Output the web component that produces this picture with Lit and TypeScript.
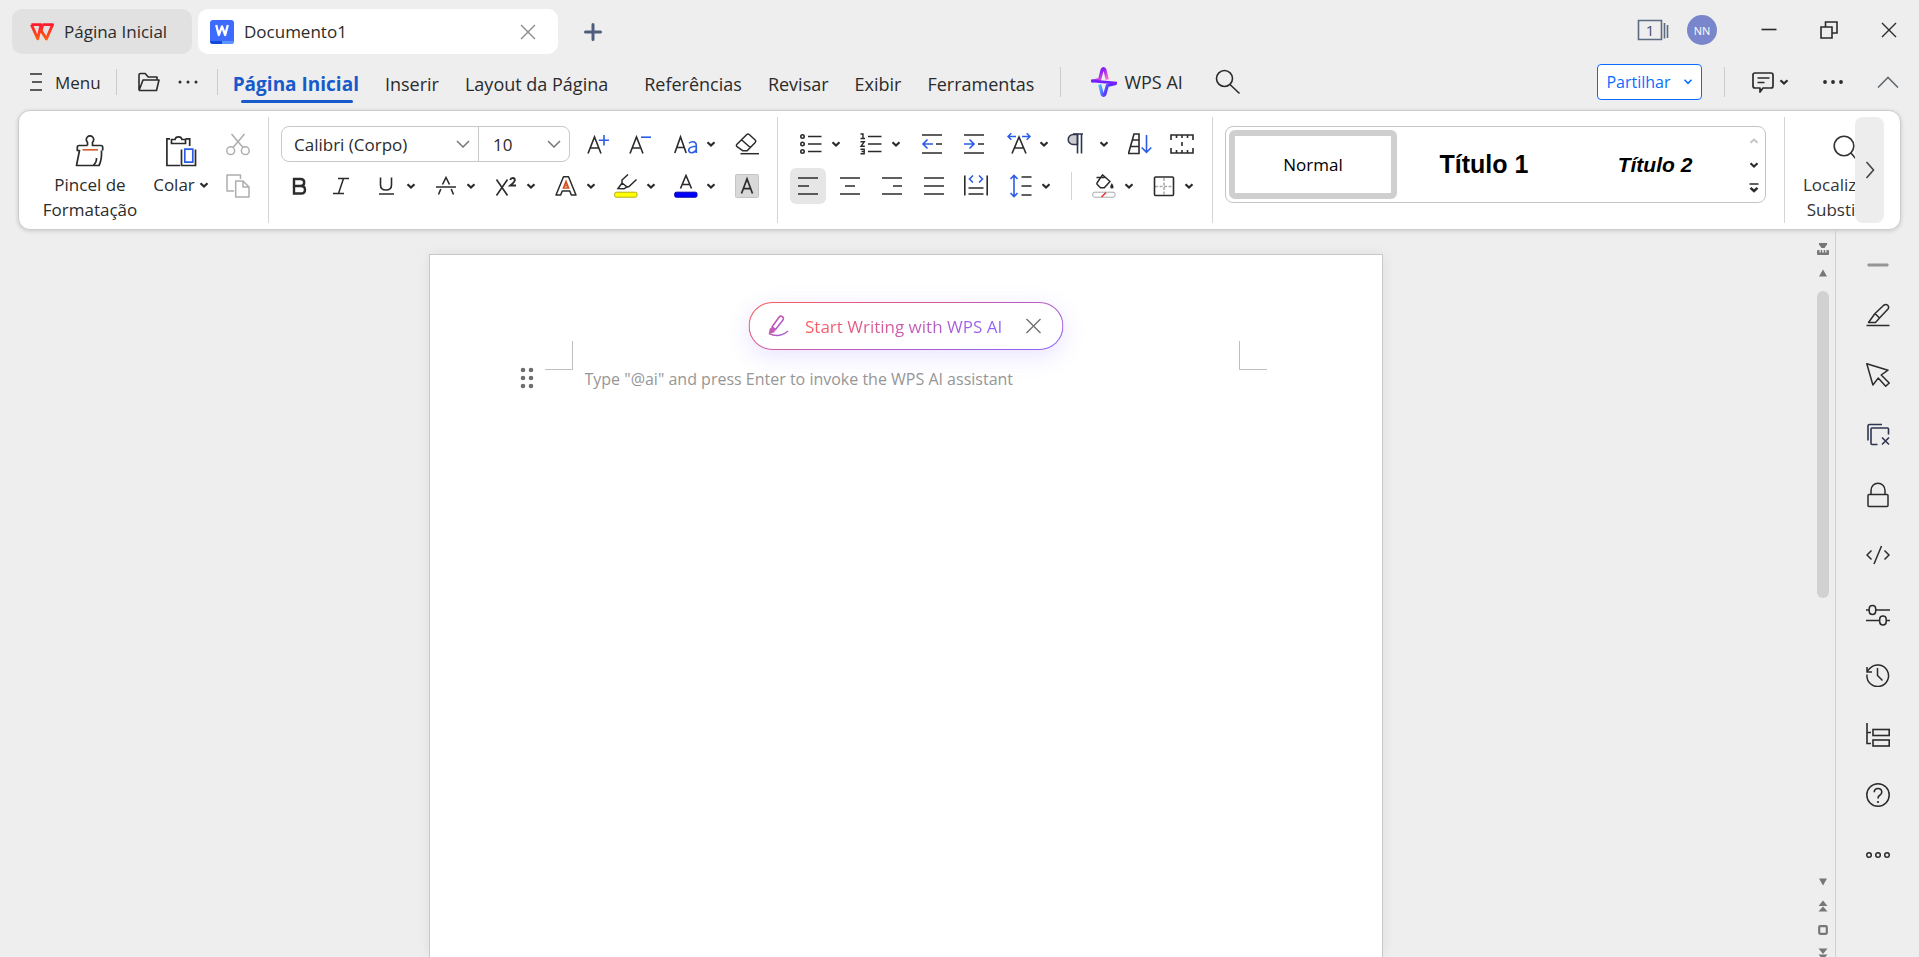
import { LitElement, html, svg, css, nothing, type SVGTemplateResult } from "lit";
import { customElement, property, state } from "lit/decorators.js";
import { classMap } from "lit/directives/class-map.js";

type Glyph = { w: number; h: number; art: SVGTemplateResult };

const g = (w: number, h: number, art: SVGTemplateResult): Glyph => ({ w, h, art });

const ICONS: Record<string, Glyph> = {
  wps: g(24, 18, svg`
    <defs><linearGradient id="wps" x1="0" y1="0" x2="0" y2="1">
      <stop offset="0" stop-color="#ff1a2e"/><stop offset="1" stop-color="#ff5a10"/></linearGradient></defs>
    <path d="M1.4 1.6H11L7.8 15.8 1.4 1.6M12.6 1.6H22.6L16.4 16 9.8 5.6M12.6 1.6 11.4 7.4"
      fill="none" stroke="url(#wps)" stroke-width="2.8" stroke-linejoin="round"/>`),
  doc: g(24, 24, svg`
    <rect width="24" height="24" rx="3" fill="#3d6bff"/>
    <path d="M0 21h12v3H3a3 3 0 0 1-3-3z" fill="#0f4bd8"/><path d="M12 21h12a3 3 0 0 1-3 3h-9z" fill="#5b95ff"/>
    <path d="M6.2 5 8.8 15 12 6.4 15.2 15 17.8 5" fill="none" stroke="#fff" stroke-width="2.3" stroke-linejoin="round"/>`),
  close: g(16, 16, svg`<path d="M1 1 15 15M15 1 1 15" fill="none" stroke="currentColor" stroke-width="1.4"/>`),
  plus: g(18, 18, svg`<path d="M9 1.5v15M1.5 9h15" stroke="#4e5d7c" stroke-width="3" stroke-linecap="round"/>`),
  pages: g(32, 22, svg`
    <path d="M1.5 1.5h23v19h-23zM27.5 4v15.5M30.5 6v13" fill="none" stroke="#5b6b82" stroke-width="1.6"/>`),
  minimize: g(16, 16, svg`<path d="M.5 7.5h15" stroke="currentColor" stroke-width="1.6"/>`),
  restore: g(18, 18, svg`<path d="M1 6h11v11H1zM5.5 6V1H17v11h-5" fill="none" stroke="currentColor" stroke-width="1.6"/>`),
  burger: g(14, 18, svg`<path d="M1 1h12M3 9h10M1 17h12" stroke="currentColor" stroke-width="1.5"/>`),
  folder: g(24, 20, svg`
    <path d="M2 18.5V3q0-1.500 1.500-1.500h4.700l3 3.500H20v3M2 18.500 6 8h16l-2.500 10.500H2" fill="none" stroke="currentColor" stroke-width="1.600" stroke-linejoin="round"/>`),
  dots: g(20, 6, svg`<g fill="currentColor"><circle cx="2" cy="3" r="1.5"/><circle cx="10" cy="3" r="1.5"/><circle cx="18" cy="3" r="1.5"/></g>`),
  dotsBold: g(20, 6, svg`<g fill="currentColor"><circle cx="2" cy="3" r="1.9"/><circle cx="10" cy="3" r="1.9"/><circle cx="18" cy="3" r="1.9"/></g>`),
  spark: g(26, 30, svg`
    <defs>
      <linearGradient id="sp1" x1="0" y1="0" x2="1" y2="1"><stop offset=".4" stop-color="#8a1cf8"/><stop offset=".9" stop-color="#ff6ad0"/></linearGradient>
      <linearGradient id="sp2" x1="0" y1="0" x2="1" y2=".3"><stop offset="0" stop-color="#4fc8ff"/><stop offset=".6" stop-color="#5a2bff"/></linearGradient>
    </defs>
    <path d="M1 14.200 8.700 12.500 11.200 2.700q1.300-2 2.600 0L16.300 12.500" fill="none" stroke="url(#sp1)" stroke-width="3.200"/>
    <path d="M8.700 17.500 11.200 27.300q1.300 2 2.600 0L16.300 18.500 25 16.500" fill="none" stroke="url(#sp2)" stroke-width="3.200"/>
    <path d="M0 12.500 26 14.800v2.700L0 15.200z" fill="#7420ff"/>`),
  search: g(26, 26, svg`<g fill="none" stroke="currentColor" stroke-width="1.6"><circle cx="9.5" cy="9.5" r="8"/><path d="M15 15.5 24.5 24.5"/></g>`),
  locate: g(32, 32, svg`<g fill="none" stroke="currentColor" stroke-width="1.6"><circle cx="15" cy="11" r="9.8"/><path d="M22 18 29.500 27"/></g>`),
  comment: g(22, 22, svg`
    <g fill="none" stroke="currentColor" stroke-width="1.7" stroke-linejoin="round"><path d="M3 2h16q2 0 2 2v11q0 2-2 2h-8l-3 4v-4H3q-2 0-2-2V4q0-2 2-2z"/><path d="M5.5 7h12M5.5 11.5h7"/></g>`),
  chevron: g(10, 10, svg`<path d="M1.5 3.2 5 6.5 8.5 3.2" fill="none" stroke="currentColor" stroke-width="2.2"/>`),
  chevronBlue: g(10, 10, svg`<path d="M1.5 2.800 5 6.300 8.500 2.800" fill="none" stroke="currentColor" stroke-width="1.6"/>`),
  chevronThin: g(14, 8, svg`<path d="M1 1 7 7 13 1" fill="none" stroke="#777" stroke-width="1.5"/>`),
  collapse: g(22, 12, svg`<path d="M1 11.5 11 1.5 21 11.5" fill="none" stroke="#666b75" stroke-width="1.6"/>`),
  next: g(10, 18, svg`<path d="M1.5 1 8.5 9 1.5 17" fill="none" stroke="#444" stroke-width="1.6"/>`),
  painter: g(32, 32, svg`
    <g fill="none" stroke="currentColor" stroke-width="1.7" stroke-linejoin="round">
      <path d="M13.500 10.500V7.300a3.700 3.700 0 1 1 5 0v3.200H27q1.700 0 1.700 1.700v3.300M13.500 10.500H5q-1.700 0-1.700 1.700v3.300H5.500L2.500 30.500H25q3-6 2.500-15"/>
      <path d="M22.500 23q.3 4.500-3.200 7.300"/></g>
    <path d="M8.5 14.800H24" stroke="#d2622a" stroke-width="1.7"/>`),
  paste: g(32, 32, svg`
    <g fill="none" stroke="currentColor" stroke-width="1.7">
      <path d="M5 3.800H1.900V30.500H15M20.500 3.800h4.200V11M6.500 4.500V8.500h14V4.500h-3.600q-.4-2.700-3.400-2.700t-3.400 2.700z"/>
      <path d="M16.500 14.500v16h14v-16"/></g>
    <path d="M19.800 14.200h8v13h-8z" fill="none" stroke="#2b5ce6" stroke-width="1.7"/>`),
  cut: g(24, 24, svg`<g fill="none" stroke="#adadad" stroke-width="1.5"><circle cx="4.7" cy="18.7" r="3.9"/><circle cx="19.3" cy="18.7" r="3.9"/><path d="M5.5 2 17 15.5M18.5 2 7 15.5"/></g>`),
  copy: g(24, 24, svg`<path d="M8 17H1V1h13.500v4M9.700 7h7.300l6 6v10H9.700zM17 7v6h6" fill="none" stroke="#adadad" stroke-width="1.5" stroke-linejoin="round"/>`),
  grow: g(24, 24, svg`<path d="M1 21.5 7.5 5 14 21.5M3.5 16h8" fill="none" stroke="currentColor" stroke-width="1.6"/><path d="M17 3v10.5M11.800 8.200H22" stroke="#2b5ce6" stroke-width="1.6"/>`),
  shrink: g(24, 24, svg`<path d="M1 21.5 7.5 5 14 21.5M3.5 16h8" fill="none" stroke="currentColor" stroke-width="1.6"/><path d="M12 5.200H22" stroke="#2b5ce6" stroke-width="1.6"/>`),
  letterCase: g(24, 24, svg`<path d="M.8 21 6.500 5 12.200 21M2.800 15.500h7.500" fill="none" stroke="currentColor" stroke-width="1.6"/><path d="M15 11.300q1.500-1.500 3.600-1.500 3.700 0 3.700 3.700V21M22.300 14.300c-5 .3-7.600 1-7.600 3.700 0 3.800 5.900 3.700 7.600-.6" fill="none" stroke="#2b5ce6" stroke-width="1.6"/>`),
  eraser: g(24, 24, svg`<g fill="none" stroke="currentColor" stroke-width="1.5" stroke-linejoin="round"><path d="M2 12.200 11.800 2.500q1.200-1 2.400 0l6 5.500q1.200 1.300 0 2.500l-8 8.300H8L2 14.600q-1.200-1.200 0-2.400zM6.500 7.700l9 8"/><path d="M5.500 21.700h18.500"/></g>`),
  bold: g(24, 24, svg`<path d="M7 5h6.500q3.700 0 3.700 3.400T13.500 12H7zM7 12h7q4 0 4 3.700t-4 3.800H7z" fill="none" stroke="currentColor" stroke-width="2.4"/>`),
  italic: g(24, 24, svg`<path d="M9 4.500H20M4 19.500H15M14.500 4.500 9.500 19.500" stroke="currentColor" stroke-width="1.5"/>`),
  underline: g(24, 24, svg`<path d="M6.500 3.500V11q0 5 5.500 5t5.500-5V3.500M5 20h15" fill="none" stroke="currentColor" stroke-width="1.6"/>`),
  strike: g(24, 24, svg`<path d="M2 13h20M8.500 10.500 12 3.500l3.500 7M6.800 15 4.500 20.500M17.200 15l2.300 5.500" fill="none" stroke="currentColor" stroke-width="1.6"/>`),
  power: g(24, 24, svg`<path d="M2.500 5.500 13.500 21.500M13.500 5.500 2.500 21.500" stroke="currentColor" stroke-width="1.6"/><path d="M16.200 6Q16.800 4 18.800 4t2 2.200Q20.800 7.600 16.300 11.500H22" fill="none" stroke="currentColor" stroke-width="1.9"/>`),
  effects: g(24, 24, svg`<path d="M2 21 9.500 2.800h5L22 21h-4.700l-1.500-4H8.200l-1.500 4z" fill="none" stroke="currentColor" stroke-width="1.5" stroke-linejoin="round"/><path d="M9.500 14 12 7.500l2.500 6.500zM10.500 11.600h3" fill="none" stroke="#d2531f" stroke-width="1.7"/>`),
  highlight: g(24, 24, svg`<g fill="none" stroke="currentColor" stroke-width="1.5"><path d="M4 14.500 8 9 13 13l-3 1.800zM8 9V6l6-5.500M13 13l2-.5 7.500-7"/></g><rect x=".7" y="18.2" width="22.3" height="5" rx="1.5" fill="#ff0" stroke="#b9ab10"/>`),
  fontColor: g(24, 24, svg`<path d="M6.500 14.500 12 1.500l5.500 13M8.500 10.500h7" fill="none" stroke="currentColor" stroke-width="1.6"/><rect x=".7" y="18.2" width="22.3" height="5" rx="1.5" fill="#00f" stroke="#0000b0"/>`),
  shade: g(24, 24, svg`<rect x=".5" y=".5" width="23" height="23" rx="1" fill="#d9d9d9" stroke="#c4c4c4"/><path d="M6.500 19.500 12 5l5.500 14.500M8.500 14.700h7" fill="none" stroke="currentColor" stroke-width="1.7"/>`),
  bullets: g(24, 24, svg`<g fill="none" stroke="currentColor" stroke-width="1.6"><circle cx="3.5" cy="4.5" r="1.7"/><circle cx="3.5" cy="12" r="1.7"/><circle cx="3.5" cy="19.5" r="1.7"/><path d="M9 4.500h13.500M9 12h13.500M9 19.500h13.500"/></g>`),
  numbers: g(24, 24, svg`<g fill="none" stroke="currentColor" stroke-width="1.6"><path d="M9 4.500h13.500M9 12h13.500M9 19.500h13.500"/><path d="M1.500 2H4v4.700M1.500 6.500H6M1.500 9.700h3.800L2 14.300h3.800M1.500 17.300h3.700v4.500H1.500M2.500 19.500h2.700" stroke-width="1.4"/></g>`),
  outdent: g(24, 24, svg`<path d="M2 3h20M16 12h6M2 21h20" stroke="currentColor" stroke-width="1.6"/><path d="M13 12H3M7.500 7.500 3 12l4.500 4.500" fill="none" stroke="#2b5ce6" stroke-width="1.6"/>`),
  indent: g(24, 24, svg`<path d="M2 3h20M16 12h6M2 21h20" stroke="currentColor" stroke-width="1.6"/><path d="M2 12h10M7.500 7.500 12 12l-4.500 4.500" fill="none" stroke="#2b5ce6" stroke-width="1.6"/>`),
  textScale: g(24, 24, svg`<path d="M5 21.500 12 5l7 16.500M7.500 16h9" fill="none" stroke="currentColor" stroke-width="1.6"/><path d="M9 4.500H1M4.300 1.200 1 4.500l3.300 3.300M15 4.500h8M19.700 1.200 23 4.500l-3.300 3.300" fill="none" stroke="#2b5ce6" stroke-width="1.5"/>`),
  pilcrow: g(24, 24, svg`<path d="M10.500 2.500H6.200a5 5 0 0 0 0 10h4.300z" fill="#ccc" stroke="#2e3550" stroke-width="1.5"/><path d="M10.500 21.500V2M14.500 21.500V2M6 2h10" fill="none" stroke="#2e3550" stroke-width="1.6"/>`),
  sort: g(24, 24, svg`<path d="M.5 21.500 6 2h5v19.500zM4.500 8H11M3 14.500h8" fill="none" stroke="currentColor" stroke-width="1.6"/><path d="M18.500 3v17M13.700 15.500l4.800 4.800 4.800-4.800" fill="none" stroke="#2b5ce6" stroke-width="1.6"/>`),
  tabstops: g(24, 24, svg`<path d="M1 8V3h22v5M1 16v5h22v-5M6.500 3v3M12 3v3M17.500 3v3M6.500 21v-3M12 21v-3M17.500 21v-3M12 10v4" fill="none" stroke="currentColor" stroke-width="1.6"/>`),
  left: g(24, 24, svg`<path d="M2 4h20M2 12h11M2 20h20" stroke="currentColor" stroke-width="1.6"/>`),
  center: g(24, 24, svg`<path d="M2 4h20M7 12h10M2 20h20" stroke="currentColor" stroke-width="1.6"/>`),
  right: g(24, 24, svg`<path d="M2 4h20M13 12h9M2 20h20" stroke="currentColor" stroke-width="1.6"/>`),
  justify: g(24, 24, svg`<path d="M2 4h20M2 12h20M2 20h20" stroke="currentColor" stroke-width="1.6"/>`),
  distribute: g(24, 24, svg`<path d="M.8 1.500v20M23.200 1.500v20M4.500 14h15M4.500 20h15" stroke="currentColor" stroke-width="1.6"/><path d="M9 1.500 5.500 5 9 8.500M15 1.500 18.500 5 15 8.500" fill="none" stroke="#2b5ce6" stroke-width="1.6"/>`),
  spacing: g(24, 24, svg`<path d="M12.500 3h10M12.500 12h10M12.500 21h10" stroke="currentColor" stroke-width="1.6"/><path d="M5 2v20M1.500 5 5 1.500 8.500 5M1.500 19 5 22.500 8.500 19" fill="none" stroke="#2b5ce6" stroke-width="1.6"/>`),
  fill: g(24, 24, svg`<g fill="none" stroke="currentColor" stroke-width="1.5" stroke-linejoin="round"><path d="M10.500 .800 18 7.500l-5.700 6.300H8.500L5.300 10.500q-.8-1 0-2zM4.500 3.500h8"/></g><path d="M19.800 9q1.800 2.500 1.800 3.900a1.700 1.700 0 0 1-3.400 0q0-1.400 1.600-3.900z" fill="currentColor"/><rect x=".7" y="18.2" width="22.3" height="5" rx="2" fill="#fff" stroke="#aaa"/><path d="M9.500 23 14 18.500" stroke="#e33" stroke-width="1.6"/>`),
  borders: g(24, 24, svg`<path d="M12 4v17M3 12.500h18" stroke="#aaa" stroke-width="1.5" stroke-dasharray="3 1.5"/><rect x="2.5" y="3" width="19" height="18.5" rx="1" fill="none" stroke="currentColor" stroke-width="1.6"/>`),
  caretUp: g(10, 10, svg`<path d="M1.500 6.800 5 3.500 8.500 6.800" fill="none" stroke="#c4c4c4" stroke-width="2"/>`),
  expand: g(10, 12, svg`<path d="M.5 2h9" stroke="currentColor" stroke-width="1.5"/><path d="M1.500 5.800 5 9l3.500-3.200" fill="none" stroke="currentColor" stroke-width="2.400"/>`),
  write: g(24, 24, svg`
    <defs><linearGradient id="wr" x1="0" y1="0" x2="1" y2="1"><stop offset="0" stop-color="#c04ab0"/><stop offset=".5" stop-color="#c45bb4"/><stop offset="1" stop-color="#8a63f5"/></linearGradient></defs>
    <g fill="none" stroke="url(#wr)" stroke-width="1.6" stroke-linejoin="round"><path d="M5.500 13 12.500 3.200q1.500-1.700 3.300-.5t.7 3.200L9 15.500z"/><path d="M2.500 19.500q10 5 19-2.500"/></g>
    <path d="M5 13.500 9 16l-1.500 2.500-5.300 1.300 1-5z" fill="#c45bb4"/>`),
  grip: g(14, 24, svg`<g fill="#6e6e6e"><circle cx="3" cy="4" r="2.3"/><circle cx="11" cy="4" r="2.3"/><circle cx="3" cy="12" r="2.3"/><circle cx="11" cy="12" r="2.3"/><circle cx="3" cy="20" r="2.3"/><circle cx="11" cy="20" r="2.3"/></g>`),
  split: g(12, 14, svg`<path d="M2 1h8v1.500L7.500 6h-3L2 2.500z" fill="#777"/><path d="M0 9q0-1 1-1h1.500v2.500h1.300V8h1.400v2.500h1.600V8h1.400v2.500h1.300V8H11q1 0 1 1v3q0 1-1 1H1q-1 0-1-1z" fill="#777"/>`),
  triUp: g(10, 8, svg`<path d="M5 .5 9 7.500H1z" fill="#777"/>`),
  triDown: g(10, 8, svg`<path d="M5 7.500 1 .5h8z" fill="#777"/>`),
  dblUp: g(10, 12, svg`<path d="M5 .5 9.500 6h-9zM5 6.500l4.500 5h-9z" fill="#777"/>`),
  dblDown: g(10, 12, svg`<path d="M5 6 .5.500h9zM5 11.500.5 6.500h9z" fill="#777"/>`),
  square: g(10, 10, svg`<rect x="1.200" y="1.200" width="7.600" height="7.600" rx="1" fill="none" stroke="#777" stroke-width="2.200"/>`),
  dash: g(22, 4, svg`<rect x=".5" y=".5" width="21" height="3" rx="1" fill="#959595"/>`),
  pen: g(24, 24, svg`<g fill="none" stroke="currentColor" stroke-width="1.5" stroke-linejoin="round"><path d="M2.500 19.500 9 10.500 18 2q2-1.300 3.700.3t.3 3.700L13.500 15l-4 4.500zM9 10.500l4.500 4.500"/><path d="M.5 22.500h23"/></g>`),
  cursor: g(24, 24, svg`<path d="M.8.800 22 7.200 15.200 12l8 8-3.500 3.300-7.500-8.200-5.300 6.900z" fill="none" stroke="currentColor" stroke-width="1.5" stroke-linejoin="round"/>`),
  clearSel: g(24, 24, svg`<g fill="none" stroke="#2e3550" stroke-width="1.6"><path d="M2 17.500V3q0-1.500 1.500-1.500H16M11.500 21.500H6q-1 0-1-1V6q0-1 1-1h15.500q1 0 1 1v5.500M16 14.500l7 7M23 14.500l-7 7"/></g>`),
  lock: g(24, 26, svg`<g fill="none" stroke="currentColor" stroke-width="1.5"><rect x="2" y="12.5" width="20" height="12" rx="1"/><path d="M5 12.500V8.500a7 7.300 0 0 1 14 0v4"/></g>`),
  code: g(24, 20, svg`<path d="M5.500 5.500 1 10l4.500 4.500M18.500 5.500 23 10l-4.500 4.500M15.500 1 8 19" fill="none" stroke="currentColor" stroke-width="1.5"/>`),
  sliders: g(24, 24, svg`<g fill="none" stroke="currentColor" stroke-width="1.5"><path d="M0 7h3M10 7h14M0 17.500h13.500M20.500 17.500H24"/><rect x="3.200" y="2.500" width="6.500" height="9" rx="3.200"/><rect x="13.700" y="13" width="6.500" height="9" rx="3.200"/></g>`),
  history: g(24, 24, svg`<path d="M1 11.500a10.800 10.800 0 1 0 2.700-6L1 8.500M1 4v5h5M11.500 5v7.500l5 5" fill="none" stroke="currentColor" stroke-width="1.5"/>`),
  tree: g(24, 24, svg`<g fill="none" stroke="currentColor" stroke-width="1.6"><path d="M1 0v20.500h4M1 9.500h4"/><rect x="7" y="6.5" width="16.2" height="6"/><rect x="7" y="17" width="16.2" height="6"/></g>`),
  help: g(24, 24, svg`<circle cx="12" cy="12" r="11.2" fill="none" stroke="currentColor" stroke-width="1.5"/><path d="M8.200 9.300q.2-3.800 3.800-3.800t3.800 3.500q0 2-2 3.200-1.800 1-1.800 3.300" fill="none" stroke="currentColor" stroke-width="1.6"/><circle cx="12" cy="19" r="1.100" fill="currentColor"/>`),
  rings: g(24, 8, svg`<g fill="none" stroke="currentColor" stroke-width="1.5"><circle cx="3" cy="4" r="2.3"/><circle cx="12" cy="4" r="2.3"/><circle cx="21" cy="4" r="2.3"/></g>`),
};

const icon = (name: string) => {
  const { w, h, art } = ICONS[name];
  return html`<svg width=${w} height=${h} viewBox="0 0 ${w} ${h}" aria-hidden="true">${art}</svg>`;
};

const reset = css`
  * { box-sizing: border-box; }
  svg { display: block; flex: none; }
  button, select, textarea {
    font: inherit; color: inherit; background: none; border: 0; margin: 0; padding: 0; border-radius: 0;
  }
  button { display: flex; align-items: center; justify-content: center; white-space: nowrap; cursor: default; }
`;

type Tool = { icon: string; label: string; menu?: boolean; on?: boolean };

@customElement("tool-button")
class ToolButton extends LitElement {
  @property() icon = "";
  @property() label = "";
  @property({ type: Boolean }) menu = false;
  @property({ type: Boolean }) on = false;

  static styles = [reset, css`
    :host { display: flex; flex: none; width: 42px; justify-content: center; }
    :host([menu]) { width: 60px; }
    .tool { width: 36px; height: 36px; border-radius: 6px; }
    .tool.menu { width: 54px; gap: 8px; padding-left: 5px; }
    .tool.on { background: #e6e6e6; }
  `];

  render() {
    return html`<button class=${classMap({ tool: true, menu: this.menu, on: this.on })}
      aria-label=${this.label} title=${this.label}>${icon(this.icon)}${this.menu ? icon("chevron") : nothing}</button>`;
  }
}

@customElement("title-bar")
class TitleBar extends LitElement {
  static styles = [reset, css`
    :host { display: flex; padding: 9px 0 0 12px; }
    .tab { display: flex; align-items: center; height: 45px; border-radius: 10px; font-size: 17px; white-space: nowrap; }
    .home { width: 180px; background: #e1e1e1; justify-content: flex-start; padding: 0 18px; gap: 10px; }
    .file { width: 360px; margin-left: 6px; padding: 0 12px; background: #fff; }
    .name { flex: 1; margin-left: 10px; }
    .close { width: 36px; height: 36px; color: #8a8a8a; }
    .add { width: 36px; height: 45px; margin-left: 17px; }
    .system { display: flex; align-items: center; height: 42px; margin-left: auto; }
    .pages { position: relative; width: 32px; color: #3f4d63; font-size: 15px; }
    .count { position: absolute; left: 0; top: 0; width: 26px; line-height: 22px; text-align: center; }
    .avatar { width: 30px; height: 30px; margin: 0 22px 0 18px; border-radius: 50%; background: #7986cb; color: #fff; font-size: 11px; }
    .win { width: 60px; height: 42px; }
  `];

  render() {
    return html`
      <button class="tab home">${icon("wps")}<span>Página Inicial</span></button>
      <div class="tab file">${icon("doc")}<span class="name">Documento1</span>
        <button class="close" aria-label="Fechar documento">${icon("close")}</button></div>
      <button class="add" aria-label="Novo documento">${icon("plus")}</button>
      <div class="system">
        <button class="pages" aria-label="Janelas abertas">${icon("pages")}<span class="count">1</span></button>
        <button class="avatar">NN</button>
        <button class="win" aria-label="Minimizar">${icon("minimize")}</button>
        <button class="win" aria-label="Restaurar">${icon("restore")}</button>
        <button class="win" aria-label="Fechar">${icon("close")}</button>
      </div>`;
  }
}

const TABS = ["Página Inicial", "Inserir", "Layout da Página", "Referências", "Revisar", "Exibir", "Ferramentas"];

@customElement("menu-bar")
class MenuBar extends LitElement {
  @state() private active = 0;

  static styles = [reset, css`
    :host { display: flex; align-items: center; height: 56px; padding: 0 20px 0 29px; }
    .menu { gap: 12px; font-size: 17px; }
    .sep { width: 1px; height: 26px; background: #ccc; margin: 0 15px; }
    .sep.tall { height: 30px; margin: 0 30px 0 26px; }
    .folder { padding: 0 5px; }
    .more { padding: 0 4px 0 12px; }
    nav { display: flex; gap: 26px; align-self: flex-end; margin-bottom: 8px; }
    .tab { position: relative; height: 36px; font-size: 18px; }
    .tab.wide { margin-right: 10px; }
    .tab.on { color: #175bcb; font-size: 19px; font-weight: 700; }
    .tab.on::after { content: ""; position: absolute; left: 8px; right: 6px; bottom: -1px; height: 3px; border-radius: 2px; background: #175bcb; }
    .ai { gap: 7px; font-size: 18px; }
    .find { margin-left: 32px; }
    .end { display: flex; align-items: center; margin-left: auto; }
    .share { width: 105px; height: 36px; gap: 12px; border: 1px solid #0a6cff; border-radius: 4px; background: #fff; color: #0a6cff; font-size: 16px; }
    .end .sep { height: 30px; margin: 0 27px 0 22px; }
    .note { gap: 5px; }
    .dots { margin: 0 34px; }
  `];

  render() {
    return html`
      <button class="menu">${icon("burger")}<span>Menu</span></button>
      <span class="sep"></span>
      <button class="folder" aria-label="Abrir">${icon("folder")}</button>
      <button class="more" aria-label="Mais comandos">${icon("dots")}</button>
      <span class="sep"></span>
      <nav aria-label="Guias">${TABS.map((t, i) => html`
        <button class=${classMap({ tab: true, on: i === this.active, wide: t.length > 15 })} @click=${() => (this.active = i)}>${t}</button>`)}</nav>
      <span class="sep tall"></span>
      <button class="ai">${icon("spark")}<span>WPS AI</span></button>
      <button class="find" aria-label="Pesquisar">${icon("search")}</button>
      <div class="end">
        <button class="share"><span>Partilhar</span>${icon("chevronBlue")}</button>
        <span class="sep"></span>
        <button class="note" aria-label="Comentários">${icon("comment")}${icon("chevron")}</button>
        <button class="dots" aria-label="Mais opções">${icon("dotsBold")}</button>
        <button aria-label="Recolher faixa">${icon("collapse")}</button>
      </div>`;
  }
}

const FONT_1: Tool[] = [
  { icon: "grow", label: "Aumentar letra" }, { icon: "shrink", label: "Diminuir letra" },
  { icon: "letterCase", label: "Maiúsculas e minúsculas", menu: true }, { icon: "eraser", label: "Limpar formatação" },
];
const FONT_2: Tool[] = [
  { icon: "bold", label: "Negrito" }, { icon: "italic", label: "Itálico" },
  { icon: "underline", label: "Sublinhado", menu: true }, { icon: "strike", label: "Rasurado", menu: true },
  { icon: "power", label: "Sobrescrito", menu: true }, { icon: "effects", label: "Efeitos de texto", menu: true },
  { icon: "highlight", label: "Realce", menu: true }, { icon: "fontColor", label: "Cor da letra", menu: true },
  { icon: "shade", label: "Sombreado de caracteres" },
];
const PARA_1: Tool[] = [
  { icon: "bullets", label: "Marcas", menu: true }, { icon: "numbers", label: "Numeração", menu: true },
  { icon: "outdent", label: "Diminuir avanço" }, { icon: "indent", label: "Aumentar avanço" },
  { icon: "textScale", label: "Escala de texto", menu: true }, { icon: "pilcrow", label: "Marcas de parágrafo", menu: true },
  { icon: "sort", label: "Ordenar" }, { icon: "tabstops", label: "Tabulações" },
];
const PARA_2: Tool[] = [
  { icon: "left", label: "Alinhar à esquerda", on: true }, { icon: "center", label: "Centrar" },
  { icon: "right", label: "Alinhar à direita" }, { icon: "justify", label: "Justificar" },
  { icon: "distribute", label: "Distribuir" }, { icon: "spacing", label: "Espaçamento entre linhas", menu: true },
];
const PARA_3: Tool[] = [
  { icon: "fill", label: "Sombreado", menu: true }, { icon: "borders", label: "Limites", menu: true },
];

const tools = (list: Tool[]) => list.map(t => html`
  <tool-button icon=${t.icon} label=${t.label} ?menu=${t.menu} ?on=${t.on}></tool-button>`);

@customElement("ribbon-bar")
class RibbonBar extends LitElement {
  static styles = [reset, css`
    :host {
      display: flex; height: 120px; margin: 0 18px; padding: 0 16px 0 0; background: #fff;
      border: 1px solid #ccc; border-radius: 12px; box-shadow: 0 1px 4px rgba(0, 0, 0, .16); font-size: 17px;
    }
    .strip { display: flex; flex: 1; min-width: 0; overflow: hidden; }
    .group { flex: none; display: flex; }
    .sep { flex: none; width: 1px; margin: 6px 0; background: #d4d4d4; }
    .clipboard { padding: 0 9px 0 22px; }
    .big { flex-direction: column; justify-content: flex-start; padding-top: 24px; line-height: 25px; gap: 5px; }
    .painter { width: 98px; margin-right: 12px; }
    .paste { width: 60px; margin-right: 6px; }
    .line { display: flex; align-items: center; gap: 4px; }
    .stack { display: flex; flex-direction: column; padding-top: 12px; }
    .small { width: 42px; height: 42px; }
    .rows { flex-direction: column; padding: 12px 9px 0; }
    .row { display: flex; align-items: center; height: 42px; }
    tool-button[menu] + tool-button:not([menu]) { margin-left: 4px; }
    .combos { display: flex; width: 289px; height: 36px; margin: 0 8px 0 3px; border: 1px solid #c8c8c8; border-radius: 8px; overflow: hidden; }
    .combo { display: grid; align-items: center; flex: none; width: 196px; }
    .combo + .combo { flex: 1; border-left: 1px solid #c8c8c8; }
    .combo select { grid-area: 1 / 1; appearance: none; width: 100%; height: 34px; padding: 0 28px 0 12px; }
    .combo + .combo select { padding-left: 14px; }
    .combo svg { grid-area: 1 / 1; justify-self: end; margin-right: 8px; pointer-events: none; }
    .rule { width: 1px; height: 28px; margin: 0 8px 0 14px; background: #d4d4d4; }
    .styles { padding: 15px 18px 0 12px; }
    .gallery { display: flex; gap: 3px; width: 541px; height: 77px; padding: 3px 0 3px 3px; border: 1px solid #c4c4c4; border-radius: 8px; }
    .style { width: 168px; height: 69px; color: #000; }
    .style.on { border: 6px solid #cfcfcf; border-radius: 6px; }
    .h1 { font: bold 25px "Liberation Sans", Arial, sans-serif; }
    .h2 { font: italic bold 21px "Liberation Sans", Arial, sans-serif; }
    .arrows { flex: 1; display: flex; flex-direction: column; justify-content: space-between; }
    .arrows button { height: 22px; }
    .locate { padding-left: 18px; color: #333; }
    .next { flex: none; width: 29px; margin: 6px 0; background: #ededed; border-radius: 8px; }
  `];

  render() {
    return html`
      <div class="strip">
        <div class="group clipboard">
          <button class="big painter">${icon("painter")}<span>Pincel de<br>Formatação</span></button>
          <button class="big paste">${icon("paste")}<span class="line">Colar${icon("chevron")}</span></button>
          <div class="stack">
            <button class="small" aria-label="Cortar">${icon("cut")}</button>
            <button class="small" aria-label="Copiar">${icon("copy")}</button>
          </div>
        </div>
        <span class="sep"></span>
        <div class="group rows">
          <div class="row">
            <div class="combos">
              <label class="combo"><select aria-label="Tipo de letra"><option>Calibri (Corpo)</option></select>${icon("chevronThin")}</label>
              <label class="combo"><select aria-label="Tamanho da letra"><option>10</option></select>${icon("chevronThin")}</label>
            </div>
            ${tools(FONT_1)}
          </div>
          <div class="row">${tools(FONT_2)}</div>
        </div>
        <span class="sep"></span>
        <div class="group rows">
          <div class="row">${tools(PARA_1)}</div>
          <div class="row">${tools(PARA_2)}<span class="rule"></span>${tools(PARA_3)}</div>
        </div>
        <span class="sep"></span>
        <div class="group styles">
          <div class="gallery">
            <button class="style on">Normal</button>
            <button class="style h1">Título 1</button>
            <button class="style h2">Título 2</button>
            <div class="arrows">
              <button aria-label="Estilos anteriores">${icon("caretUp")}</button>
              <button aria-label="Estilos seguintes">${icon("chevron")}</button>
              <button aria-label="Todos os estilos">${icon("expand")}</button>
            </div>
          </div>
        </div>
        <span class="sep"></span>
        <div class="group locate">
          <button class="big">${icon("locate")}<span>Localizar e<br>Substituir</span></button>
        </div>
      </div>
      <button class="next" aria-label="Mais ferramentas">${icon("next")}</button>`;
  }
}

@customElement("document-page")
class DocumentPage extends LitElement {
  @state() private hint = true;

  static styles = [reset, css`
    :host { display: block; position: relative; width: 954px; max-width: 100%; padding-top: 86px; background: #fff; border: 1px solid #c8c8c8; border-bottom: 0; box-shadow: 0 0 12px rgba(0, 0, 0, .07); }
    .marks { display: flex; justify-content: space-between; padding: 0 115px; }
    .mark { width: 28px; height: 29px; border-bottom: 1px solid #c0c0c0; }
    .mark.start { border-right: 1px solid #c0c0c0; }
    .mark.end { border-left: 1px solid #c0c0c0; }
    .line { display: flex; align-items: flex-start; padding: 0 144px 0 90px; gap: 51px; }
    .grip { margin-top: -4px; }
    .text { flex: 1; margin-top: -3px; height: 400px; resize: none; outline: 0; font-size: 16px; line-height: 24px; }
    .text::placeholder { color: #969696; opacity: 1; }
    .pill {
      position: absolute; top: 47px; left: 50%; transform: translateX(-50%); display: flex; align-items: center;
      width: 315px; height: 48px; padding: 0 15px 0 17px; border: 1px solid transparent; border-radius: 24px;
      background: linear-gradient(#fff, #fff) padding-box, linear-gradient(165deg, #ff5a5a, #c45bb4 50%, #8a63ff) border-box;
      box-shadow: 0 6px 24px rgba(120, 80, 255, .16);
    }
    .start-ai { flex: 1; justify-content: flex-start; gap: 15px; font-size: 17px; }
    .grad { background: linear-gradient(90deg, #ff5a5a, #c45bb4 55%, #8a63ff); background-clip: text; color: transparent; }
    .dismiss { width: 28px; height: 28px; color: #707070; }
  `];

  render() {
    return html`
      <div class="marks"><span class="mark start"></span><span class="mark end"></span></div>
      <div class="line">
        <button class="grip" aria-label="Mover parágrafo">${icon("grip")}</button>
        <textarea class="text" aria-label="Texto do documento" placeholder='Type "@ai" and press Enter to invoke the WPS AI assistant'></textarea>
      </div>
      ${this.hint ? html`<div class="pill">
        <button class="start-ai">${icon("write")}<span class="grad">Start Writing with WPS AI</span></button>
        <button class="dismiss" aria-label="Dispensar" @click=${() => (this.hint = false)}>${icon("close")}</button>
      </div>` : nothing}`;
  }
}

const SIDE: [string, string][] = [
  ["pen", "Destacar"], ["cursor", "Selecionar"], ["clearSel", "Limpar seleção"], ["lock", "Proteger"], ["code", "Código"],
  ["sliders", "Ajustes"], ["history", "Histórico"], ["tree", "Estrutura"], ["help", "Ajuda"], ["rings", "Mais"],
];

@customElement("app-root")
class AppRoot extends LitElement {
  static styles = [reset, css`
    :host {
      display: flex; flex-direction: column; height: 100vh; overflow: hidden; background: #eee; color: #2b2b2b;
      font: 17px "Open Sans", "Segoe UI", sans-serif;
    }
    title-bar, menu-bar, ribbon-bar { flex: none; }
    main { flex: 1; display: flex; min-height: 0; }
    .canvas { flex: 1; display: flex; justify-content: center; padding-top: 24px; min-width: 0; overflow: hidden; }
    .scroll { display: flex; flex-direction: column; width: 24px; padding-top: 7px; margin-bottom: -9px; }
    .scroll button { flex: none; width: 24px; height: 24px; }
    .track { flex: 1; padding: 6px 6px 0; }
    .thumb { height: 53%; border-radius: 6px; background: #d1d1d1; }
    aside { display: flex; flex-direction: column; align-items: center; width: 84px; padding-top: 15px; border-left: 1px solid #d0d0d0; }
    .side { flex: none; width: 60px; height: 60px; }
    .side.fold { height: 40px; }
  `];

  render() {
    return html`
      <title-bar></title-bar>
      <menu-bar></menu-bar>
      <ribbon-bar></ribbon-bar>
      <main>
        <div class="canvas"><document-page></document-page></div>
        <div class="scroll">
          <button aria-label="Dividir">${icon("split")}</button>
          <button aria-label="Subir">${icon("triUp")}</button>
          <div class="track"><div class="thumb"></div></div>
          <button aria-label="Descer">${icon("triDown")}</button>
          <button aria-label="Página anterior">${icon("dblUp")}</button>
          <button aria-label="Procurar objeto">${icon("square")}</button>
          <button aria-label="Página seguinte">${icon("dblDown")}</button>
        </div>
        <aside>
          <button class="side fold" aria-label="Ocultar painel">${icon("dash")}</button>
          ${SIDE.map(([i, l]) => html`<button class="side" aria-label=${l}>${icon(i)}</button>`)}
        </aside>
      </main>`;
  }
}
